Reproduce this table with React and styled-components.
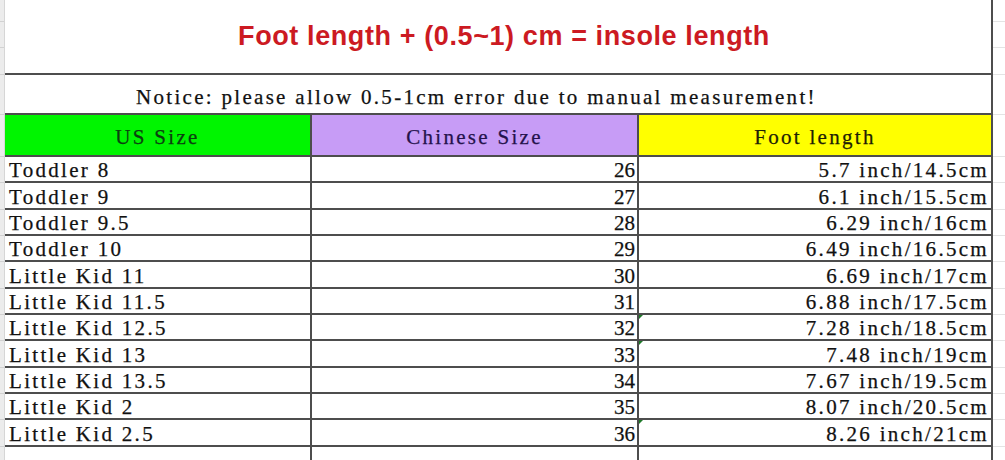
import React from "react";
import styled, { createGlobalStyle } from "styled-components";

const GlobalStyle = createGlobalStyle`
  html, body { margin: 0; padding: 0; background: #ffffff; }
  * { box-sizing: border-box; }
`;

const LINE = "#4d4d4d";
const MONO = `"Liberation Serif", "Times New Roman", serif`;

const Page = styled.div`
  display: flex;
  width: 1005px;
  height: 460px;
  overflow: hidden;
  background: #fff;
`;

const Gutter = styled.div`
  width: 5px;
  flex: none;
  display: flex;
  flex-direction: column;
  background: #ececec;
  border-right: 1px solid #d6d6d6;
`;

const GridLine = styled.div`
  flex: none;
  height: ${(p) => p.$h}px;
  border-bottom: 1px solid ${(p) => p.$c || "#d2d2d2"};
`;

const Sheet = styled.div`
  width: 988px;
  flex: none;
  display: flex;
  flex-direction: column;
  border-right: 2px solid ${LINE};
`;

const Margin = styled.div`
  flex: 1;
  display: flex;
  flex-direction: column;
`;

const Title = styled.div`
  height: 75px;
  flex: none;
  display: flex;
  align-items: center;
  justify-content: center;
  padding: 0 0 1px 12px;
  border-bottom: 2px solid ${LINE};
  font-family: "Liberation Sans", Arial, sans-serif;
  font-weight: bold;
  font-size: 27px;
  letter-spacing: 0.6px;
  color: #cc1a22;
`;

const Notice = styled.div`
  height: 40px;
  flex: none;
  display: flex;
  align-items: center;
  padding: 5px 0 0 131px;
  border-bottom: 2px solid ${LINE};
  font-family: ${MONO};
  font-size: 21px;
  line-height: 22px;
  letter-spacing: 2.3px;
  color: #111;
  -webkit-text-stroke: 0.25px #111;
  white-space: pre;
`;

const Row = styled.div`
  display: grid;
  grid-template-columns: 307px 327px 1fr;
  flex: none;
  height: ${(p) => p.$h}px;
  border-bottom: ${(p) => (p.$open ? "none" : `2px solid ${LINE}`)};
`;

const FillRow = styled(Row)`
  flex: 1;
`;

const Cell = styled.div`
  position: relative;
  display: flex;
  align-items: center;
  justify-content: ${(p) =>
    p.$align === "right" ? "flex-end" : p.$align === "center" ? "center" : "flex-start"};
  padding: ${(p) =>
    p.$align === "right" ? "3px 2px 0 0" : p.$align === "center" ? "5px 0 0 0" : "3px 0 0 4px"};
  border-right: ${(p) => (p.$last ? "none" : `2px solid ${LINE}`)};
  background: ${(p) => p.$bg || "transparent"};
  color: ${(p) => p.$color || "#111"};
  -webkit-text-stroke: 0.25px ${(p) => p.$color || "#111"};
  font-family: ${MONO};
  font-size: ${(p) => (p.$num ? "21px" : "21px")};
  line-height: 21px;
  letter-spacing: ${(p) => (p.$num ? "0" : "2.3px")};
  white-space: pre;
`;

const Flag = styled.span`
  position: absolute;
  left: 0;
  top: 0;
  width: 0;
  height: 0;
  border-top: 4px solid #1f7a2a;
  border-right: 4px solid transparent;
`;

const rows = [
  ["Toddler 8", "26", "5.7 inch/14.5cm"],
  ["Toddler 9", "27", "6.1 inch/15.5cm"],
  ["Toddler 9.5", "28", "6.29 inch/16cm"],
  ["Toddler 10", "29", "6.49 inch/16.5cm"],
  ["Little Kid 11", "30", "6.69 inch/17cm"],
  ["Little Kid 11.5", "31", "6.88 inch/17.5cm"],
  ["Little Kid 12.5", "32", "7.28 inch/18.5cm", true],
  ["Little Kid 13", "33", "7.48 inch/19cm", true],
  ["Little Kid 13.5", "34", "7.67 inch/19.5cm"],
  ["Little Kid 2", "35", "8.07 inch/20.5cm"],
  ["Little Kid 2.5", "36", "8.26 inch/21cm", true],
];

const rowHeights = [26, 27, 26, 26, 27, 26, 26, 27, 26, 26, 27];

const sideLines = [22, 26, 27, 40, 42, ...rowHeights];

export default function App() {
  return (
    <>
      <GlobalStyle />
      <Page>
        <Gutter>
          {sideLines.map((h, i) => (
            <GridLine key={i} $h={h} />
          ))}
        </Gutter>
        <Sheet>
          <Title>Foot length + (0.5~1) cm = insole length</Title>
          <Notice>Notice: please allow 0.5-1cm error due to manual measurement!</Notice>
          <Row $h={42}>
            <Cell $align="center" $bg="#00f500" $color="#0c3f10">US Size</Cell>
            <Cell $align="center" $bg="#c79cf6" $color="#24124c">Chinese Size</Cell>
            <Cell $align="center" $bg="#ffff00" $color="#1e1e05" $last>Foot length</Cell>
          </Row>
          {rows.map(([us, cn, foot, flag], i) => (
            <Row key={us} $h={rowHeights[i]}>
              <Cell>{us}</Cell>
              <Cell $align="right" $num>{cn}</Cell>
              <Cell $align="right" $last>
                {flag && <Flag />}
                {foot}
              </Cell>
            </Row>
          ))}
          <FillRow $open>
            <Cell />
            <Cell />
            <Cell $last />
          </FillRow>
        </Sheet>
        <Margin>
          {sideLines.map((h, i) => (
            <GridLine key={i} $h={h} $c="#e4e4e4" />
          ))}
        </Margin>
      </Page>
    </>
  );
}
